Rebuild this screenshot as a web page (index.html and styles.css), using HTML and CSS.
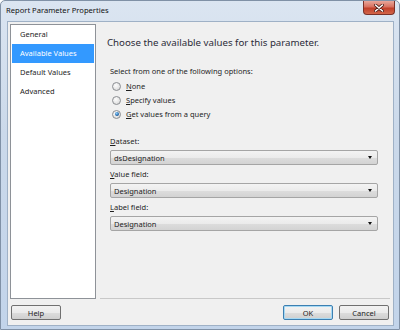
FILE: index.html
```html
<!DOCTYPE html>
<html>
<head>
    <title>Report Parameter Properties</title>
    <meta charset="utf-8">
    <link rel="stylesheet" href="styles.css">
</head>
<body>
    <div class="window">
        <div class="titlebar">
            <span class="title">Report Parameter Properties</span>
            <div class="close-btn">
                <svg width="10" height="8" viewBox="0 0 10 8">
                    <path d="M1.5 1 L8.5 7 M8.5 1 L1.5 7" stroke="#4a1a14" stroke-width="3" stroke-linecap="round"/>
                    <path d="M1.5 1 L8.5 7 M8.5 1 L1.5 7" stroke="#fff" stroke-width="1.6" stroke-linecap="round"/>
                </svg>
            </div>
        </div>

        <div class="client">
            <div class="main">
                <ul class="nav">
                    <li>General</li>
                    <li class="selected">Available Values</li>
                    <li>Default Values</li>
                    <li>Advanced</li>
                </ul>

                <div class="page">
                    <h1>Choose the available values for this parameter.</h1>

                    <div class="page-body">
                        <p class="label">Select from one of the following options:</p>
                        <div class="radios">
                            <div class="radio"><span class="circle"></span><span><u>N</u>one</span></div>
                            <div class="radio"><span class="circle"></span><span><u>S</u>pecify values</span></div>
                            <div class="radio checked"><span class="circle"></span><span><u>G</u>et values from a query</span></div>
                        </div>

                        <div class="fields">
                            <div class="field">
                                <p class="label"><u>D</u>ataset:</p>
                                <div class="combo"><span>dsDesignation</span><span class="arrow"></span></div>
                            </div>
                            <div class="field">
                                <p class="label"><u>V</u>alue field:</p>
                                <div class="combo"><span>Designation</span><span class="arrow"></span></div>
                            </div>
                            <div class="field">
                                <p class="label"><u>L</u>abel field:</p>
                                <div class="combo"><span>Designation</span><span class="arrow"></span></div>
                            </div>
                        </div>
                    </div>
                </div>
            </div>

            <div class="footer">
                <button class="btn">Help</button>
                <div class="footer-right">
                    <button class="btn default">OK</button>
                    <button class="btn">Cancel</button>
                </div>
            </div>
        </div>
    </div>
</body>
</html>
```

FILE: styles.css
```css
* {
    margin: 0;
    padding: 0;
    box-sizing: border-box;
}

body {
    background: #fff;
    font-family: "Noto Sans", "Open Sans", sans-serif;
    font-size: 7.5px;
    color: #1e1e1e;
}

.window {
    width: 400px;
    height: 330px;
    display: flex;
    flex-direction: column;
    background: linear-gradient(to bottom, #dbe5f1 0%, #cbd9ea 40%, #c2d4ea 100%);
    border: 1px solid #8091a6;
    border-radius: 5px 5px 0 0;
}

.titlebar {
    height: 20px;
    display: flex;
    align-items: flex-start;
    padding: 0 4px 0 5px;
}

.title {
    font-size: 7.6px;
    line-height: 19px;
    color: #111;
}

.close-btn {
    margin-left: auto;
    width: 32px;
    height: 14px;
    display: flex;
    align-items: center;
    justify-content: center;
    background: linear-gradient(to bottom, #e8a79b 0%, #d8705f 45%, #c13f2a 55%, #d2664a 100%);
    border: 1px solid #7a3128;
    border-top: none;
    border-radius: 0 0 4px 4px;
}

.client {
    flex: 1;
    margin: 0 5px 3px 6px;
    background: #f0f0f0;
    border: 1px solid #9fb1c6;
    padding: 2px 3px 5px 2px;
    display: flex;
    flex-direction: column;
}

.main {
    height: 275px;
    display: flex;
    gap: 4px;
}

.nav {
    width: 86px;
    list-style: none;
    background: #fff;
    border: 1px solid #8e9298;
    padding: 0 1px;
}

.nav li {
    height: 19px;
    line-height: 19px;
    padding-left: 8px;
    color: #1e1e1e;
}

.nav li.selected {
    background: #3399ff;
    color: #fff;
}

.page {
    flex: 1;
    border-bottom: 1px solid #c8c8c8;
    padding: 12px 0 0 7px;
}

h1 {
    font-size: 9.7px;
    font-weight: normal;
    line-height: 14px;
    color: #2b2b38;
}

.page-body {
    padding: 16px 12px 0 3px;
}

.label {
    line-height: 11px;
}

.radios {
    margin-top: 2px;
}

.radio {
    height: 14px;
    display: flex;
    align-items: center;
    gap: 5px;
    padding-left: 2px;
}

.circle {
    width: 9px;
    height: 9px;
    border-radius: 50%;
    border: 1px solid #8b8e92;
    background: radial-gradient(circle at 40% 35%, #fdfdfd 0%, #e4e4e4 60%, #cfcfcf 100%);
    display: flex;
    align-items: center;
    justify-content: center;
}

.radio.checked .circle::after {
    content: "";
    width: 4px;
    height: 4px;
    border-radius: 50%;
    background: radial-gradient(circle at 40% 35%, #8fd0ff 0%, #2a6fb0 55%, #0d3a6a 100%);
}

.fields {
    margin-top: 15px;
    display: flex;
    flex-direction: column;
    gap: 4px;
}

.field .label {
    margin-bottom: 3px;
}

.combo {
    height: 15px;
    display: flex;
    align-items: center;
    justify-content: space-between;
    padding: 0 5px 0 3px;
    border: 1px solid #a5a5a5;
    border-radius: 2px;
    background: linear-gradient(to bottom, #f3f3f3 0%, #ebebeb 50%, #dddddd 51%, #d3d3d3 100%);
}

.arrow {
    width: 0;
    height: 0;
    border-left: 2.5px solid transparent;
    border-right: 2.5px solid transparent;
    border-top: 3px solid #111;
}

.footer {
    margin-top: 6px;
    height: 15px;
    display: flex;
    justify-content: space-between;
    padding: 0 1px;
}

.footer-right {
    display: flex;
    gap: 6px;
}

.btn {
    width: 50px;
    height: 15px;
    font-family: inherit;
    font-size: 7.5px;
    color: #1e1e1e;
    border: 1px solid #707070;
    border-radius: 2px;
    background: linear-gradient(to bottom, #f2f2f2 0%, #ebebeb 50%, #dddddd 51%, #cfcfcf 100%);
}

.btn.default {
    border-color: #3c7fb1;
    box-shadow: inset 0 0 0 1px #a6d9f4;
}
```
